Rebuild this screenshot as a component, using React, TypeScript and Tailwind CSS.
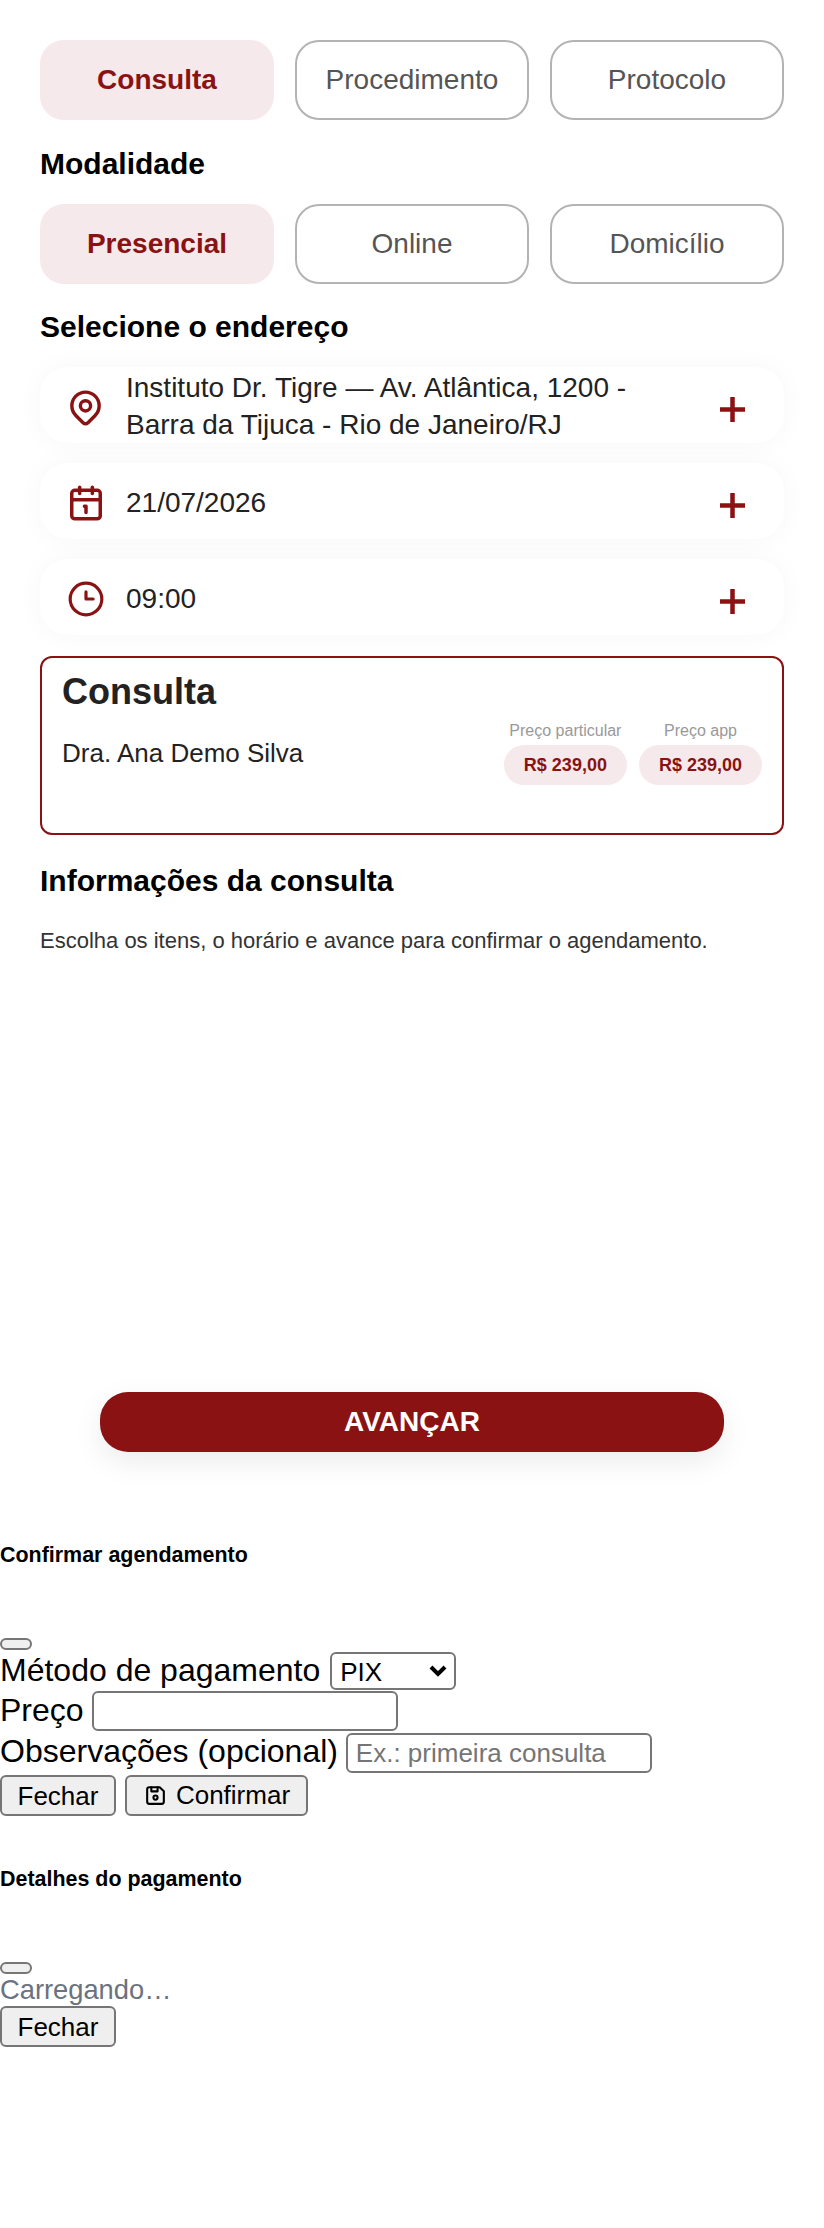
import type { ReactNode } from "react";
import { TbDeviceFloppy, TbMapPin } from "react-icons/tb";
import { Calendar1 } from "lucide-react";

const FONT = "font-['Liberation_Sans',Arial,sans-serif]";

function Tab({ label, active }: { label: string; active?: boolean }) {
  return (
    <button
      className={
        active
          ? "flex-1 h-[80px] rounded-[24px] border-2 border-transparent bg-[#f6e9eb] text-[28px] font-bold text-[#8a1212]"
          : "flex-1 h-[80px] rounded-[24px] border-2 border-[#b3b3b3] bg-white text-[28px] text-[#555555]"
      }
    >
      {label}
    </button>
  );
}

function ClockIcon() {
  return (
    <svg width="38" height="38" viewBox="0 0 24 24" fill="none" stroke="currentColor" strokeWidth="2" strokeLinecap="round" strokeLinejoin="round">
      <circle cx="12" cy="12" r="10" />
      <path d="M12 7.5V12h4.5" />
    </svg>
  );
}

function PlusIcon() {
  return (
    <svg width="25" height="25" viewBox="0 0 25 25" className="mt-[8px] flex-shrink-0 text-[#8a1212]" stroke="currentColor" strokeWidth="4.5">
      <path d="M12.5 0v25M0 12.5h25" />
    </svg>
  );
}

function InfoRow({ icon, text }: { icon: ReactNode; text: ReactNode }) {
  return (
    <div className="flex h-[76px] items-center rounded-[28px] bg-white pl-[25px] pr-[39px] shadow-[0_0_28px_rgba(0,0,0,0.035)]">
      <div className="mt-[4px] flex w-[41px] flex-shrink-0 justify-center text-[#8a1212]">{icon}</div>
      <div className="ml-[20px] flex-1 pt-[2px] text-[28px] leading-[37px] text-[#222222]">{text}</div>
      <PlusIcon />
    </div>
  );
}

function PriceTag({ label, value }: { label: string; value: string }) {
  return (
    <div className="flex flex-col items-center">
      <div className="text-[16px] leading-[21px] text-[#999999]">{label}</div>
      <div className="mt-[4px] flex h-[40px] items-center rounded-[20px] bg-[#f6e9eb] px-[20px] text-[18px] font-bold text-[#8a1212]">{value}</div>
    </div>
  );
}

const nativeButton = "rounded-[6px] border-2 border-[#767676] bg-[#efefef] text-[26px]";
const nativeInput = "h-[40px] w-[306px] rounded-[6px] border-2 border-[#767676] align-top";

export default function App() {
  return (
    <div className={`${FONT} h-[2228px] w-[824px] bg-white text-black`}>
      <div className="px-[40px] pt-[40px]">
        <div className="flex gap-[21px]">
          <Tab label="Consulta" active />
          <Tab label="Procedimento" />
          <Tab label="Protocolo" />
        </div>
        <h2 className="mt-[27px] text-[30px] leading-[34px] font-bold">Modalidade</h2>
        <div className="mt-[23px] flex gap-[21px]">
          <Tab label="Presencial" active />
          <Tab label="Online" />
          <Tab label="Domicílio" />
        </div>
        <h2 className="mt-[26px] text-[30px] leading-[34px] font-bold">Selecione o endereço</h2>

        <div className="mt-[23px] flex flex-col gap-[20px]">
          <InfoRow
            icon={<TbMapPin size={41} />}
            text={<>Instituto Dr. Tigre — Av. Atlântica, 1200 -<br />Barra da Tijuca - Rio de Janeiro/RJ</>}
          />
          <InfoRow icon={<Calendar1 size={38} strokeWidth={2.2} />} text="21/07/2026" />
          <InfoRow icon={<ClockIcon />} text="09:00" />
        </div>

        <div className="mt-[21px] h-[179px] rounded-[12px] border-2 border-[#8a1212] px-[20px] pt-[12px]">
          <div className="text-[36px] leading-[44px] font-bold text-[#222222]">Consulta</div>
          <div className="mt-[6px] flex items-start justify-between">
            <div className="mt-[17px] text-[26px] leading-[32px] text-[#222222]">Dra. Ana Demo Silva</div>
            <div className="flex gap-[12px]">
              <PriceTag label="Preço particular" value="R$ 239,00" />
              <PriceTag label="Preço app" value="R$ 239,00" />
            </div>
          </div>
        </div>

        <h2 className="mt-[29px] text-[30px] leading-[34px] font-bold">Informações da consulta</h2>
        <p className="mt-[28px] text-[22px] leading-[30px] text-[#333333]">
          Escolha os itens, o horário e avance para confirmar o agendamento.
        </p>

        <div className="mt-[436px] flex justify-center">
          <button className="h-[60px] w-[624px] rounded-[28px] bg-[#8a1212] text-[28px] font-bold text-white shadow-[0_10px_30px_rgba(0,0,0,0.08)]">
            AVANÇAR
          </button>
        </div>
      </div>

      <h3 className="mt-[90px] text-[21.44px] leading-[26px] font-bold">Confirmar agendamento</h3>
      <div className="mt-[70px] text-[32px] leading-[39px]">
        <button className="block h-[12px] w-[32px] rounded-[6px] border-2 border-[#767676] bg-[#efefef]" />
        <div className="mt-[2px] h-[39px] leading-[36px]">
          <span>Método de pagamento </span>
          <span className="relative ml-[1px] inline-block h-[38px] w-[126px] align-top">
            <select className="h-full w-full appearance-none rounded-[6px] border-2 border-[#767676] bg-white pl-[8px] align-top text-[26px]" defaultValue="PIX">
              <option>PIX</option>
            </select>
            <svg width="18" height="12" viewBox="0 0 18 12" className="pointer-events-none absolute right-[9px] top-[13px]" fill="none" stroke="#000" strokeWidth="4">
              <path d="M2 2l7 7 7-7" />
            </svg>
          </span>
        </div>
        <div className="h-[41px]">
          <span>Preço </span>
          <input className={nativeInput} />
        </div>
        <div className="h-[43px]">
          <span>Observações (opcional) </span>
          <input placeholder="Ex.: primeira consulta" className={`${nativeInput} mt-[1px] -ml-[1px] px-[8px] text-[26px] placeholder:text-[#757575]`} />
        </div>
        <div className="flex gap-[9px]">
          <button className={`${nativeButton} h-[41px] w-[116px]`}>Fechar</button>
          <button className={`${nativeButton} flex h-[41px] w-[183px] items-center justify-center gap-[8px]`}>
            <TbDeviceFloppy size={25} />
            Confirmar
          </button>
        </div>
      </div>

      <h3 className="mt-[50px] text-[21.44px] leading-[26px] font-bold">Detalhes do pagamento</h3>
      <div className="mt-[70px]">
        <button className="block h-[12px] w-[32px] rounded-[6px] border-2 border-[#767676] bg-[#efefef]" />
        <div className="text-[27.3px] leading-[32px] text-[#6b7280]">Carregando…</div>
        <button className={`${nativeButton} h-[41px] w-[116px]`}>Fechar</button>
      </div>
    </div>
  );
}
